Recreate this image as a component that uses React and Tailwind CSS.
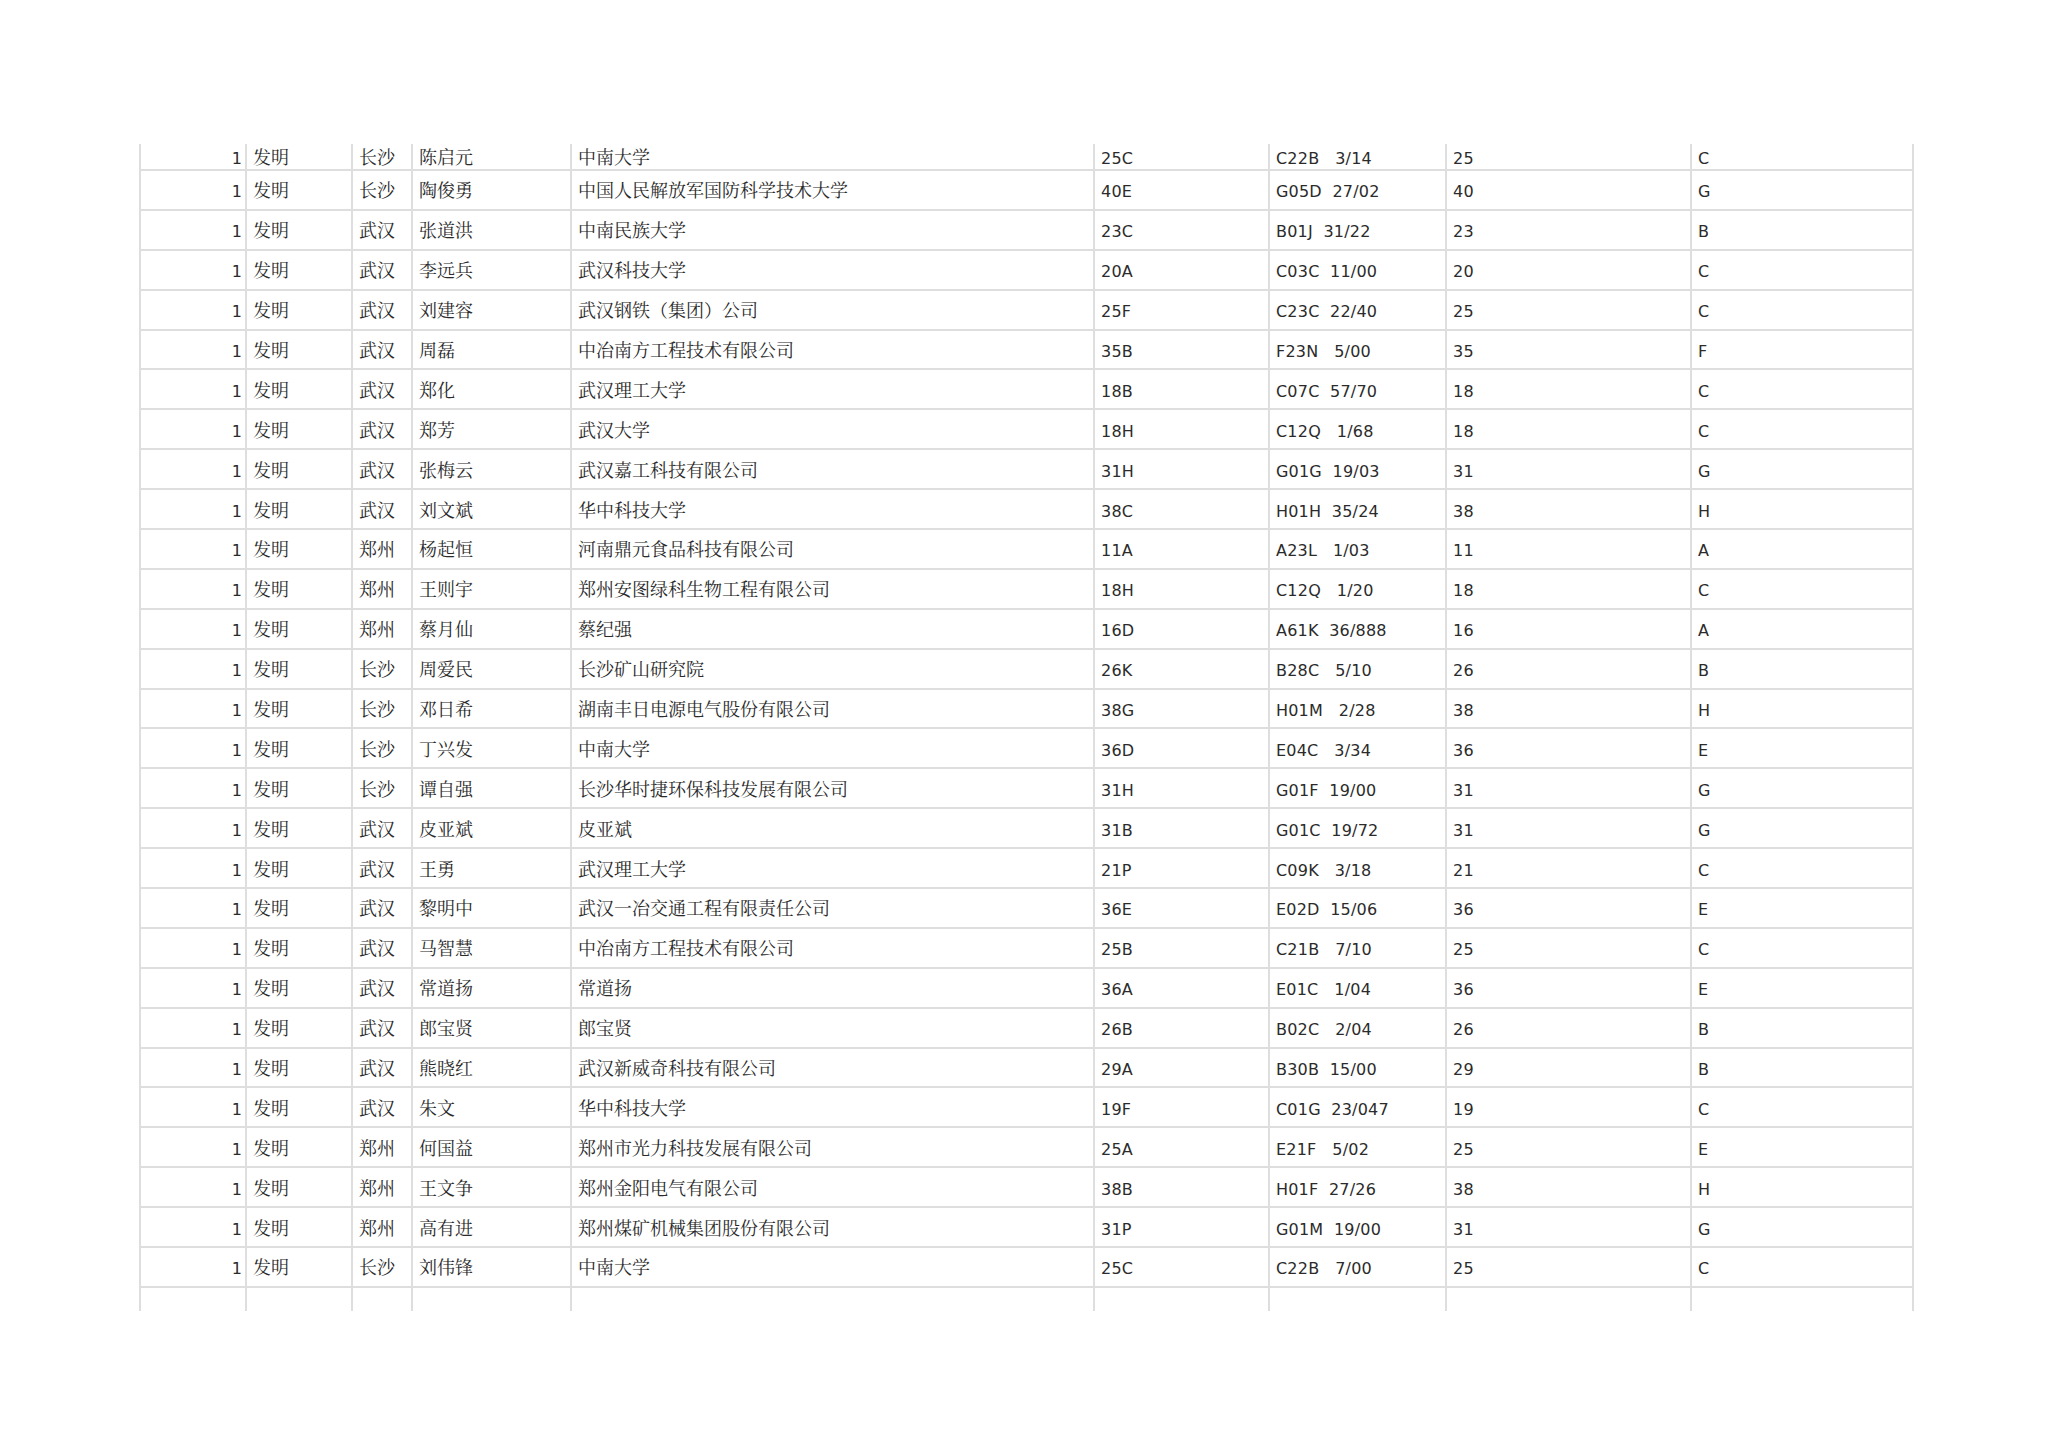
import React from "react";

// 专利授权明细（截取）
const rows = [
  ["长沙", "陈启元", "中南大学", "25C", "C22B   3/14", "25", "C"],
  ["长沙", "陶俊勇", "中国人民解放军国防科学技术大学", "40E", "G05D  27/02", "40", "G"],
  ["武汉", "张道洪", "中南民族大学", "23C", "B01J  31/22", "23", "B"],
  ["武汉", "李远兵", "武汉科技大学", "20A", "C03C  11/00", "20", "C"],
  ["武汉", "刘建容", "武汉钢铁（集团）公司", "25F", "C23C  22/40", "25", "C"],
  ["武汉", "周磊", "中冶南方工程技术有限公司", "35B", "F23N   5/00", "35", "F"],
  ["武汉", "郑化", "武汉理工大学", "18B", "C07C  57/70", "18", "C"],
  ["武汉", "郑芳", "武汉大学", "18H", "C12Q   1/68", "18", "C"],
  ["武汉", "张梅云", "武汉嘉工科技有限公司", "31H", "G01G  19/03", "31", "G"],
  ["武汉", "刘文斌", "华中科技大学", "38C", "H01H  35/24", "38", "H"],
  ["郑州", "杨起恒", "河南鼎元食品科技有限公司", "11A", "A23L   1/03", "11", "A"],
  ["郑州", "王则宇", "郑州安图绿科生物工程有限公司", "18H", "C12Q   1/20", "18", "C"],
  ["郑州", "蔡月仙", "蔡纪强", "16D", "A61K  36/888", "16", "A"],
  ["长沙", "周爱民", "长沙矿山研究院", "26K", "B28C   5/10", "26", "B"],
  ["长沙", "邓日希", "湖南丰日电源电气股份有限公司", "38G", "H01M   2/28", "38", "H"],
  ["长沙", "丁兴发", "中南大学", "36D", "E04C   3/34", "36", "E"],
  ["长沙", "谭自强", "长沙华时捷环保科技发展有限公司", "31H", "G01F  19/00", "31", "G"],
  ["武汉", "皮亚斌", "皮亚斌", "31B", "G01C  19/72", "31", "G"],
  ["武汉", "王勇", "武汉理工大学", "21P", "C09K   3/18", "21", "C"],
  ["武汉", "黎明中", "武汉一冶交通工程有限责任公司", "36E", "E02D  15/06", "36", "E"],
  ["武汉", "马智慧", "中冶南方工程技术有限公司", "25B", "C21B   7/10", "25", "C"],
  ["武汉", "常道扬", "常道扬", "36A", "E01C   1/04", "36", "E"],
  ["武汉", "郎宝贤", "郎宝贤", "26B", "B02C   2/04", "26", "B"],
  ["武汉", "熊晓红", "武汉新威奇科技有限公司", "29A", "B30B  15/00", "29", "B"],
  ["武汉", "朱文", "华中科技大学", "19F", "C01G  23/047", "19", "C"],
  ["郑州", "何国益", "郑州市光力科技发展有限公司", "25A", "E21F   5/02", "25", "E"],
  ["郑州", "王文争", "郑州金阳电气有限公司", "38B", "H01F  27/26", "38", "H"],
  ["郑州", "高有进", "郑州煤矿机械集团股份有限公司", "31P", "G01M  19/00", "31", "G"],
  ["长沙", "刘伟锋", "中南大学", "25C", "C22B   7/00", "25", "C"],
];

const cjk =
  "font-['Noto_Serif_CJK_SC','AR_PL_UMing_CN','Noto_Sans_CJK_SC',serif] text-[18px] text-[#2a2a2a] pl-[6px]";
const latin =
  "font-['Verdana','DejaVu_Sans','Liberation_Sans',sans-serif] text-[16px] tracking-[0.2px] text-[#2b2b2b] pl-[6px] pt-[5px] whitespace-pre";
const cell = "flex items-center shrink-0 border-r-2 border-[#dedede] overflow-hidden";

function Row({ data, first, empty }) {
  const h = first ? "h-[27px]" : empty ? "h-[23px]" : "h-[39.9px]";
  const b = empty ? "" : "border-b-2";
  const [city, name, org, code, ipc, num, cls] = data || [];
  return (
    <div className={`flex ${h} ${b} border-[#dedede]`}>
      <div className={`${cell} w-[106px] justify-end pr-[3px] pt-[5px] font-['Verdana','DejaVu_Sans',sans-serif] text-[16px] text-[#2b2b2b]`}>
        {empty ? "" : "1"}
      </div>
      <div className={`${cell} w-[106px] ${cjk}`}>{empty ? "" : "发明"}</div>
      <div className={`${cell} w-[60px] ${cjk}`}>{city}</div>
      <div className={`${cell} w-[159px] ${cjk}`}>{name}</div>
      <div className={`${cell} w-[523px] ${cjk}`}>{org}</div>
      <div className={`${cell} w-[175px] ${latin}`}>{code}</div>
      <div className={`${cell} w-[177px] ${latin}`}>{ipc}</div>
      <div className={`${cell} w-[245px] ${latin}`}>{num}</div>
      <div className={`${cell} w-[222px] ${latin}`}>{cls}</div>
    </div>
  );
}

export default function App() {
  return (
    <div className="w-[2048px] h-[1447px] bg-white overflow-hidden">
      <div className="ml-[139px] pt-[144px]">
        <div className="w-fit border-l-2 border-[#dedede]">
          {rows.map((r, i) => (
            <Row key={i} data={r} first={i === 0} />
          ))}
          <Row empty />
        </div>
      </div>
    </div>
  );
}
